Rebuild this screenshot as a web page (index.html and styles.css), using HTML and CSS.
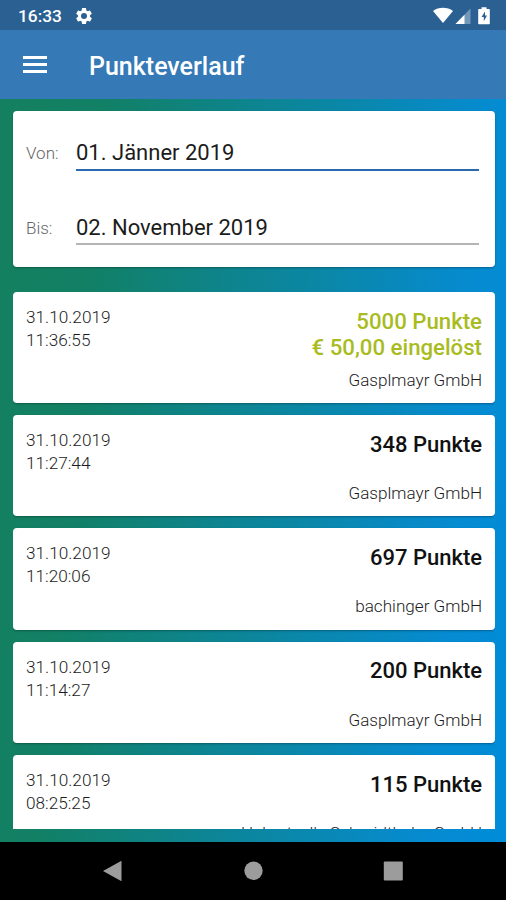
FILE: index.html
```
<!DOCTYPE html>
<html lang="de">
<head>
  <meta charset="UTF-8">
  <meta name="viewport" content="width=device-width, initial-scale=1.0">
  <title>Punkteverlauf</title>
  <link rel="stylesheet" href="styles.css">
</head>
<body>
  <div class="app">
    <div class="statusbar">
      <span class="clock">16:33</span>
      <svg class="gear" width="20" height="20" viewBox="0 0 24 24"><path fill="#fff" d="M19.14 12.94c.04-.3.06-.61.06-.94s-.02-.64-.07-.94l2.03-1.58a.49.49 0 0 0 .12-.61l-1.92-3.32a.49.49 0 0 0-.59-.22l-2.39.96a7 7 0 0 0-1.62-.94l-.36-2.54a.48.48 0 0 0-.48-.41h-3.84a.47.47 0 0 0-.47.41l-.36 2.54c-.59.24-1.13.57-1.62.94l-2.39-.96a.48.48 0 0 0-.59.22L2.74 8.87a.47.47 0 0 0 .12.61l2.03 1.58a6 6 0 0 0 0 1.88l-2.03 1.58a.49.49 0 0 0-.12.61l1.92 3.32c.12.22.37.29.59.22l2.39-.96c.5.38 1.03.7 1.62.94l.36 2.54c.05.24.24.41.48.41h3.84c.24 0 .44-.17.47-.41l.36-2.54c.59-.24 1.13-.56 1.62-.94l2.39.96c.22.08.47 0 .59-.22l1.92-3.32a.47.47 0 0 0-.12-.61zM12 15.6a3.6 3.6 0 1 1 0-7.2 3.6 3.6 0 0 1 0 7.2z"/></svg>
      <svg class="signals" width="60" height="20" viewBox="0 0 60 20">
        <path fill="#fff" d="M0 5C5.500.8 14.500.8 20 5L10 17z"/>
        <path fill="#fff" fill-opacity=".35" d="M37.500 2.500V18h-15z"/>
        <path fill="#fff" d="M31.500 8.700V18h-9z"/>
        <path fill="#fff" d="M46 3h2.500V1.300h5V3H56a.8.8 0 0 1 .8.800v13.700a.8.8 0 0 1-.8.800H46a.8.8 0 0 1-.8-.8V3.800A.8.8 0 0 1 46 3z"/>
        <path fill="#2a6192" d="M52 5.500l-3.500 5.500h2.300v4.200l3.200-5.700h-2z"/>
      </svg>
    </div>

    <header class="toolbar">
      <div class="burger"><i></i><i></i><i></i></div>
      <h1>Punkteverlauf</h1>
    </header>

    <main class="content">
      <section class="card filter">
        <div class="field">
          <label>Von:</label>
          <div class="value active">01. Jänner 2019</div>
        </div>
        <div class="field">
          <label>Bis:</label>
          <div class="value">02. November 2019</div>
        </div>
      </section>

      <div class="list">
        <div class="card entry redeemed">
          <div class="date">31.10.2019<br>11:36:55</div>
          <div class="info">
            <div class="points">5000 Punkte<br>€ 50,00 eingelöst</div>
            <div class="shop">Gasplmayr GmbH</div>
          </div>
        </div>
        <div class="card entry">
          <div class="date">31.10.2019<br>11:27:44</div>
          <div class="info">
            <div class="points">348 Punkte</div>
            <div class="shop">Gasplmayr GmbH</div>
          </div>
        </div>
        <div class="card entry">
          <div class="date">31.10.2019<br>11:20:06</div>
          <div class="info">
            <div class="points">697 Punkte</div>
            <div class="shop">bachinger GmbH</div>
          </div>
        </div>
        <div class="card entry">
          <div class="date">31.10.2019<br>11:14:27</div>
          <div class="info">
            <div class="points">200 Punkte</div>
            <div class="shop">Gasplmayr GmbH</div>
          </div>
        </div>
        <div class="card entry">
          <div class="date">31.10.2019<br>08:25:25</div>
          <div class="info">
            <div class="points">115 Punkte</div>
            <div class="shop">Hubertzelle Schmidthaler GmbH</div>
          </div>
        </div>
      </div>
    </main>

    <nav class="navbar">
      <svg width="20" height="22" viewBox="0 0 20 22"><path fill="#9c9c9c" d="M18.500.7v20.600L0 11z"/></svg>
      <svg width="20" height="22" viewBox="0 0 20 22"><circle cx="10.500" cy="10.800" r="9.200" fill="#9c9c9c"/></svg>
      <svg width="20" height="22" viewBox="0 0 20 22"><rect x=".8" y="1.500" width="19" height="19" rx="1" fill="#9c9c9c"/></svg>
    </nav>
  </div>
</body>
</html>
```
FILE: styles.css
```
* {
  box-sizing: border-box;
}
body {
  margin: 0;
  font-family: Roboto, "Liberation Sans", sans-serif;
  color: #1c1c1c;
}
.app {
  display: flex;
  flex-direction: column;
  height: 900px;
  overflow: hidden;
}
.statusbar {
  display: flex;
  align-items: center;
  height: 30px;
  padding: 2px 13px 0 18px;
  background: #2a6192;
  color: #fff;
}
.clock {
  width: 56px;
  font-size: 17.3px;
  font-weight: 500;
}
.signals {
  margin-left: auto;
}
.toolbar {
  display: flex;
  align-items: center;
  height: 69px;
  padding-left: 23px;
  background: #357ab7;
  color: #fff;
}
.burger {
  display: flex;
  flex-direction: column;
  gap: 4px;
  width: 66px;
}
.burger i {
  width: 24px;
  height: 3px;
  background: #fff;
}
h1 {
  margin: 0;
  padding-top: 3px;
  font-size: 25px;
  font-weight: 500;
}
.content {
  display: flex;
  flex-direction: column;
  flex: 1;
  min-height: 0;
  padding: 12px 11px 13px 13px;
  background: linear-gradient(95deg, #14805f 0%, #128065 18%, #068bd0 85%, #008cd8 100%);
}
.card {
  background: #fff;
  border-radius: 4px;
  box-shadow: 0 1px 2px rgba(0, 0, 0, 0.3);
}
.filter {
  height: 156px;
  flex: none;
  padding: 20px 16px 0 13px;
}
.field {
  display: flex;
  height: 75px;
}
.field label {
  width: 50px;
  padding-top: 12px;
  font-size: 17px;
  font-weight: 300;
  line-height: 20px;
  color: #666;
}
.value {
  flex: 1;
  height: 39px;
  border-bottom: 2px solid #b5b5b5;
  font-size: 22px;
  line-height: 43px;
}
.value.active {
  height: 40px;
  border-color: #2a68af;
}
.list {
  flex: 1;
  min-height: 0;
  margin-top: 25px;
  overflow: hidden;
}
.entry {
  display: flex;
  justify-content: space-between;
  height: 101.4px;
  margin-bottom: 12px;
  padding: 14px 13px 0;
}
.entry.redeemed {
  height: 111px;
}
.date {
  font-size: 17.2px;
  font-weight: 300;
  line-height: 23px;
}
.info {
  text-align: right;
}
.points {
  height: 53px;
  padding-top: 2.5px;
  font-size: 22px;
  font-weight: 500;
  line-height: 26px;
  color: #111;
}
.redeemed .points {
  height: 63px;
  padding-top: 2px;
  font-size: 22.2px;
  color: #a8bc1f;
}
.shop {
  font-size: 17.1px;
  font-weight: 300;
  line-height: 23px;
}
.navbar {
  display: flex;
  justify-content: center;
  gap: 120px;
  height: 58px;
  padding-top: 18px;
  background: #000;
}
```
